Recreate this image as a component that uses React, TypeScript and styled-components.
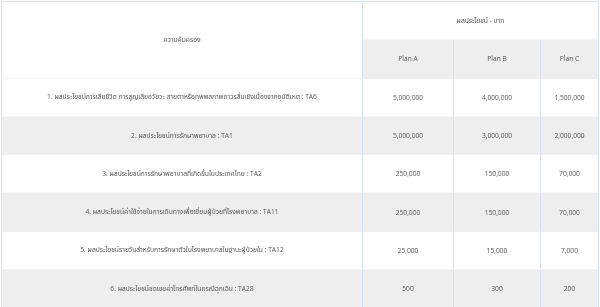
import React from "react";
import styled, { createGlobalStyle } from "styled-components";

const Global = createGlobalStyle`
  html, body { margin: 0; padding: 0; background: #ffffff; }
  body {
    font-family: "Open Sans", "Noto Sans Thai", "Noto Sans", "DejaVu Sans", sans-serif;
    -webkit-font-smoothing: antialiased;
  }
`;

const Wrap = styled.div`
  padding: 1px 0 0 1px;
  width: 598px;
`;

const Table = styled.table`
  border-collapse: collapse;
  width: 597px;
  table-layout: fixed;
  border: 1px solid #d3e2f7;
  font-size: 6.7px;
  color: #555555;
  will-change: transform;
`;

const Cell = styled.td<{ $shade?: boolean }>`
  height: 37.3px;
  padding: 0 2px;
  text-align: center;
  vertical-align: middle;
  font-weight: normal;
  background: ${(p) => (p.$shade ? "#eeeeee" : "#ffffff")};
  border-left: 1px solid #d3e2f7;
  border-bottom: 1px solid ${(p) => (p.$shade ? "#eeeeee" : "#f4f4f4")};
  white-space: nowrap;
`;

const rows = [
  ["1. ผลประโยชน์การเสียชีวิต การสูญเสียอวัยวะ สายตาหรือทุพพลภาพถาวรสิ้นเชิงเนื่องจากอุบัติเหตุ : TA6", "5,000,000", "4,000,000", "1,500,000"],
  ["2. ผลประโยชน์การรักษาพยาบาล : TA1", "5,000,000", "3,000,000", "2,000,000"],
  ["3. ผลประโยชน์การรักษาพยาบาลที่เกิดขึ้นในประเทศไทย : TA2", "250,000", "150,000", "70,000"],
  ["4. ผลประโยชน์ค่าใช้จ่ายในการเดินทางเพื่อเยี่ยมผู้ป่วยที่โรงพยาบาล : TA11", "250,000", "150,000", "70,000"],
  ["5. ผลประโยชน์รายวันสำหรับการรักษาตัวในโรงพยาบาลในฐานะผู้ป่วยใน : TA12", "25,000", "15,000", "7,000"],
  ["6. ผลประโยชน์ชดเชยค่าโทรศัพท์ในกรณีฉุกเฉิน : TA28", "500", "300", "200"],
];

export default function App() {
  return (
    <Wrap>
      <Global />
      <Table>
        <colgroup>
          <col style={{ width: 361 }} />
          <col style={{ width: 91 }} />
          <col style={{ width: 87 }} />
          <col style={{ width: 58 }} />
        </colgroup>
        <thead>
          <tr>
            <Cell as="th" rowSpan={2}>ความคุ้มครอง</Cell>
            <Cell as="th" colSpan={3}>ผลประโยชน์ - บาท</Cell>
          </tr>
          <tr>
            <Cell as="th" $shade>Plan A</Cell>
            <Cell as="th" $shade>Plan B</Cell>
            <Cell as="th" $shade>Plan C</Cell>
          </tr>
        </thead>
        <tbody>
          {rows.map((r, i) => (
            <tr key={i}>
              {r.map((c, j) => (
                <Cell key={j} $shade={i % 2 === 1}>
                  {c}
                </Cell>
              ))}
            </tr>
          ))}
        </tbody>
      </Table>
    </Wrap>
  );
}
